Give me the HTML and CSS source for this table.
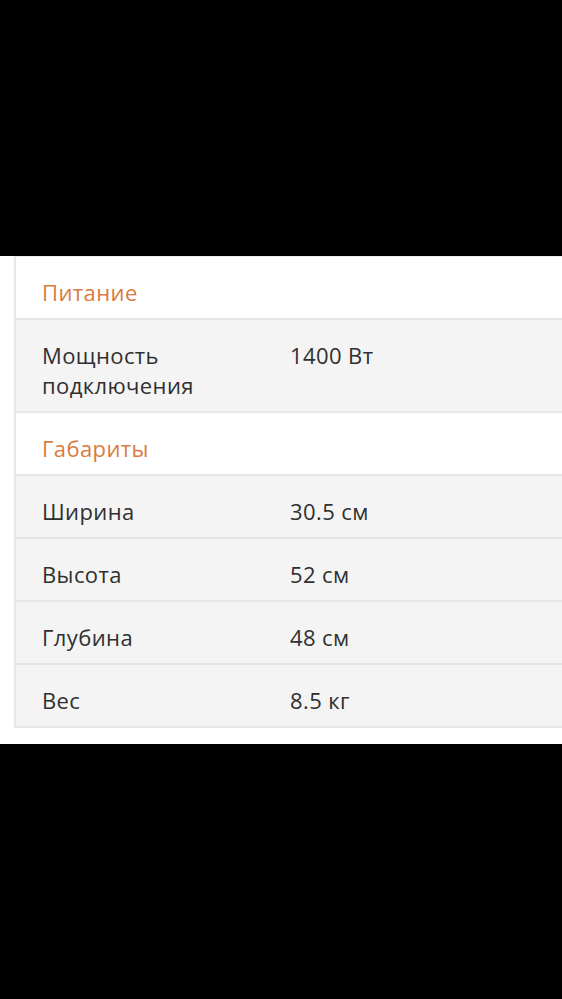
FILE: index.html
```html
<!DOCTYPE html>
<html lang="ru">
<head>
<meta charset="utf-8">
<title>Характеристики</title>
<link rel="stylesheet" href="styles.css">
</head>
<body>
<div class="sheet">
  <div class="specs">
    <div class="row section"><div class="label">Питание</div></div>
    <div class="row"><div class="label">Мощность<br>подключения</div><div class="value">1400 Вт</div></div>
    <div class="row section"><div class="label">Габариты</div></div>
    <div class="row"><div class="label">Ширина</div><div class="value">30.5 см</div></div>
    <div class="row"><div class="label">Высота</div><div class="value">52 см</div></div>
    <div class="row"><div class="label">Глубина</div><div class="value">48 см</div></div>
    <div class="row last"><div class="label">Вес</div><div class="value">8.5 кг</div></div>
  </div>
</div>
</body>
</html>
```
FILE: styles.css
```css
html, body {
  margin: 0;
  padding: 0;
  background: #000;
}
body {
  font-family: "Open Sans", "Noto Sans", sans-serif;
}
.sheet {
  margin-top: 256px;
  background: #fff;
  padding: 0 0 16px 14px;
  overflow: hidden;
}
.specs {
  width: 620px;
  border-left: 2px solid #e8e8e8;
  border-top: 1px solid #ececec;
}
.row {
  display: grid;
  grid-template-columns: 274px 1fr;
  background: #f4f4f4;
  border-bottom: 2px solid #e6e6e6;
  font-size: 22px;
  line-height: 30px;
  letter-spacing: 0.4px;
  color: #303030;
  padding: 20px 0 11px;
}
.row.section {
  background: #fff;
  color: #d97b3e;
}
.label {
  padding-left: 26px;
}
```
